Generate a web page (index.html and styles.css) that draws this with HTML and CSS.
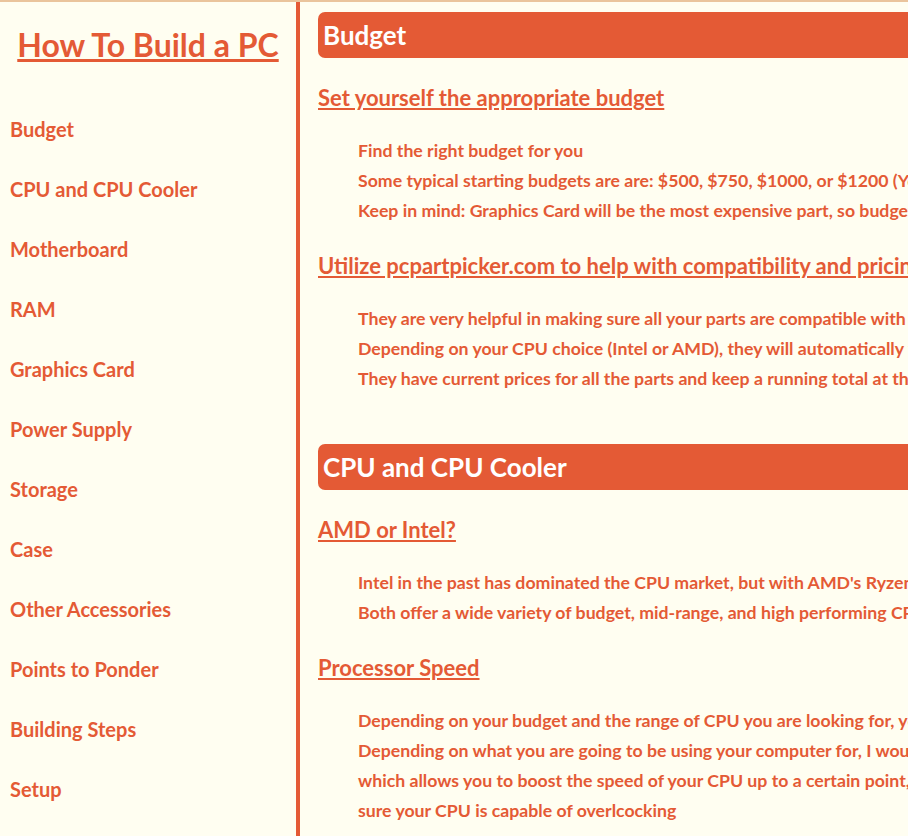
FILE: index.html
```html
<!DOCTYPE html>
<html lang="en">
<head>
<meta charset="utf-8">
<title>How To Build a PC</title>
<link rel="stylesheet" href="styles.css">
</head>
<body>
<div class="page">
  <aside class="sidebar">
    <h1 class="site-title"><a href="#">How To Build a PC</a></h1>
    <nav>
      <ul class="nav-list">
        <li><a href="#budget">Budget</a></li>
        <li><a href="#cpu">CPU and CPU Cooler</a></li>
        <li><a href="#motherboard">Motherboard</a></li>
        <li><a href="#ram">RAM</a></li>
        <li><a href="#gpu">Graphics Card</a></li>
        <li><a href="#psu">Power Supply</a></li>
        <li><a href="#storage">Storage</a></li>
        <li><a href="#case">Case</a></li>
        <li><a href="#other">Other Accessories</a></li>
        <li><a href="#ponder">Points to Ponder</a></li>
        <li><a href="#steps">Building Steps</a></li>
        <li><a href="#setup">Setup</a></li>
      </ul>
    </nav>
  </aside>
  <main class="content">
    <section class="section" id="budget">
      <h2 class="section-title">Budget</h2>
      <h3 class="topic"><a href="#">Set yourself the appropriate budget</a></h3>
      <ul class="points">
        <li>Find the right budget for you</li>
        <li>Some typical starting budgets are are: $500, $750, $1000, or $1200 (You can always go higher or lower)</li>
        <li>Keep in mind: Graphics Card will be the most expensive part, so budget accordingly</li>
      </ul>
      <h3 class="topic"><a href="#">Utilize pcpartpicker.com to help with compatibility and pricing</a></h3>
      <ul class="points">
        <li>They are very helpful in making sure all your parts are compatible with each other</li>
        <li>Depending on your CPU choice (Intel or AMD), they will automatically filter compatible parts</li>
        <li>They have current prices for all the parts and keep a running total at the bottom</li>
      </ul>
    </section>
    <section class="section" id="cpu">
      <h2 class="section-title">CPU and CPU Cooler</h2>
      <h3 class="topic"><a href="#">AMD or Intel?</a></h3>
      <ul class="points">
        <li>Intel in the past has dominated the CPU market, but with AMD's Ryzen series they are now very competitive</li>
        <li>Both offer a wide variety of budget, mid-range, and high performing CPUs</li>
      </ul>
      <h3 class="topic"><a href="#">Processor Speed</a></h3>
      <ul class="points">
        <li>Depending on your budget and the range of CPU you are looking for, you will find different speeds</li>
        <li>Depending on what you are going to be using your computer for, I would recommend overclocking,<br>which allows you to boost the speed of your CPU up to a certain point, make<br>sure your CPU is capable of overlcocking</li>
      </ul>
    </section>
  </main>
</div>
</body>
</html>
```
FILE: styles.css
```css
html {
  overflow-x: hidden;
}
body {
  margin: 0;
  background: #fffef1;
  border-top: 2px solid #eac49c;
  font-family: "Lato", "Open Sans", sans-serif;
  color: #e45a35;
}
a {
  color: #e45a35;
}
.page {
  display: flex;
  align-items: stretch;
  min-height: 834px;
}
.sidebar {
  flex: 0 0 296px;
  width: 296px;
  border-right: 4px solid #e45a35;
}
.site-title {
  margin: 27px 0 0;
  text-align: center;
  font-size: 32px;
  line-height: 32px;
  font-weight: 700;
}
.nav-list {
  list-style: none;
  margin: 38px 0 0;
  padding: 0 0 0 10px;
}
.nav-list li {
  height: 60px;
  line-height: 60px;
  font-size: 20px;
  font-weight: 700;
}
.nav-list a {
  text-decoration: none;
}
.content {
  flex: 0 0 1300px;
  padding: 10px 0 0 18px;
}
.section {
  margin-bottom: 50px;
}
.section-title {
  margin: 0;
  height: 46px;
  line-height: 46px;
  padding: 0 5px;
  background: #e45a35;
  color: #fff;
  border-radius: 7px;
  font-size: 26px;
  font-weight: 700;
}
.topic {
  margin: 28px 0 0;
  font-size: 22px;
  line-height: 24px;
  font-weight: 700;
}
.points {
  list-style: none;
  margin: 26px 0 0;
  padding: 0 0 0 40px;
}
.points li {
  font-size: 17.7px;
  line-height: 30px;
  font-weight: 700;
}
```
